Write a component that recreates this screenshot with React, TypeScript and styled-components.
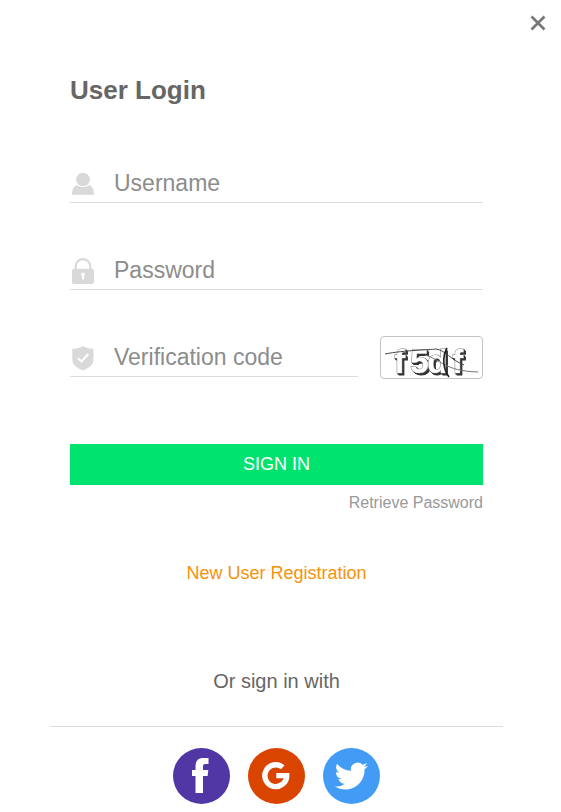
import React from "react";
import styled, { createGlobalStyle } from "styled-components";

const GlobalStyle = createGlobalStyle`
  *, *::before, *::after { box-sizing: border-box; }
  body {
    margin: 0;
    background: #fff;
    font-family: "Liberation Sans", Arial, sans-serif;
  }
`;

const Dialog = styled.main`
  margin-right: 8px;
  padding: 8px 0;
`;

const TopBar = styled.div`
  display: flex;
  justify-content: flex-end;
`;

const CloseButton = styled.button`
  display: flex;
  align-items: center;
  justify-content: center;
  width: 30px;
  height: 30px;
  padding: 0;
  border: 0;
  background: none;
  cursor: pointer;
`;

const Form = styled.form`
  display: flex;
  flex-direction: column;
  margin: 0 70px;
`;

const Title = styled.h1`
  margin: 36px 0 58px;
  color: #666;
  font-size: 26px;
  line-height: 32px;
`;

const Fields = styled.div`
  display: flex;
  flex-direction: column;
  gap: 48px;
`;

const CodeRow = styled.div`
  display: flex;
  align-items: center;
  gap: 22px;
  height: 39px;
`;

const Field = styled.label`
  display: flex;
  flex: 1;
  align-items: center;
  min-width: 0;
  gap: 18px;
  border-bottom: 1px solid #dcdcdc;
`;

const FieldIcon = styled.svg`
  flex: none;
  width: 26px;
  height: 32px;
  fill: #d9d9d9;
`;

const Input = styled.input`
  flex: 1;
  min-width: 0;
  height: 38px;
  padding: 0;
  border: 0;
  outline: 0;
  background: none;
  color: #666;
  font: 23px "Liberation Sans", Arial, sans-serif;
  &::placeholder { color: #8c8c8c; opacity: 1; }
`;

const CaptchaButton = styled.button`
  flex: none;
  width: 103px;
  height: 43px;
  padding: 0;
  border: 1px solid #c4c4c4;
  border-radius: 4px;
  background: #fff;
  cursor: pointer;
  svg { display: block; overflow: visible; }
`;

const CaptchaText = styled.text`
  fill: #fff;
  stroke: #777;
  stroke-width: 1px;
  paint-order: stroke;
  font: bold 34px "Liberation Sans", Arial, sans-serif;
  filter: drop-shadow(1px 1px 0 #333) drop-shadow(1px 1px 0 #333);
`;

const SubmitButton = styled.button`
  height: 41px;
  margin-top: 67px;
  border: 0;
  background: #00e36f;
  color: #fff;
  font: 18px "Liberation Sans", Arial, sans-serif;
  cursor: pointer;
`;

const TextLink = styled.a<{ $accent?: boolean }>`
  align-self: ${(p) => (p.$accent ? "center" : "flex-end")};
  margin-top: ${(p) => (p.$accent ? "46px" : "6px")};
  color: ${(p) => (p.$accent ? "#f7920a" : "#999")};
  font-size: ${(p) => (p.$accent ? "18px" : "16px")};
  line-height: 24px;
  text-decoration: none;
`;

const Social = styled.section`
  margin: 82px 50px 0;
`;

const SocialTitle = styled.h2`
  margin: 0;
  padding-bottom: 31px;
  border-bottom: 1px solid #dcdcdc;
  color: #666;
  font-size: 20px;
  font-weight: normal;
  line-height: 28px;
  text-align: center;
`;

const SocialList = styled.div`
  display: flex;
  justify-content: center;
  gap: 18px;
  padding-top: 21px;
`;

const SocialLink = styled.a<{ $color: string }>`
  width: 57px;
  height: 56px;
  border-radius: 50%;
  background: ${(p) => p.$color};
  svg { display: block; width: 57px; height: 56px; fill: #fff; }
`;

export default function App() {
  return (
    <>
      <GlobalStyle />
      <Dialog>
        <TopBar>
          <CloseButton type="button" aria-label="Close">
            <svg width="16" height="16" viewBox="0 0 16 16" stroke="#777" strokeWidth="2.7">
              <path d="M1.5 1.5 14.5 14.5M14.5 1.5 1.5 14.5" />
            </svg>
          </CloseButton>
        </TopBar>
        <Form onSubmit={(e) => e.preventDefault()}>
          <Title>User Login</Title>
          <Fields>
            <Field>
              <FieldIcon viewBox="0 0 26 32" aria-hidden="true">
                <ellipse cx="13" cy="12.5" rx="6.9" ry="6.7" />
                <path d="M6.8 18C10 20.8 16 20.8 19.2 18C22.8 20 24 23 24 27.7H2C2 23 3.2 20 6.8 18Z" />
              </FieldIcon>
              <Input aria-label="Username" placeholder="Username" autoComplete="username" />
            </Field>
            <Field>
              <FieldIcon viewBox="0 0 26 32" aria-hidden="true">
                <path d="M5.7 16V12.5a7.3 7.3 0 0 1 14.6 0V16" fill="none" stroke="#d9d9d9" strokeWidth="2.2" />
                <rect x="2" y="14.7" width="22" height="15.3" rx="2" />
                <path d="M13 18.5a2 2 0 0 1 1 3.7V25.5h-2v-3.3a2 2 0 0 1 1-3.7Z" fill="#fff" />
              </FieldIcon>
              <Input type="password" aria-label="Password" placeholder="Password" autoComplete="current-password" />
            </Field>
            <CodeRow>
              <Field>
                <FieldIcon viewBox="0 0 26 32" aria-hidden="true">
                  <path d="M13 5C16 7 19.5 8 23.5 7.7V18.5C23.5 24 19 27 13 29.5C7 27 2.3 24 2.3 18.5V7.7C6.5 8 10 7 13 5Z" />
                  <path d="m8 17.3 3.5 3.2L18.3 13" fill="none" stroke="#fff" strokeWidth="2" />
                </FieldIcon>
                <Input aria-label="Verification code" placeholder="Verification code" autoComplete="off" />
              </Field>
              <CaptchaButton type="button" aria-label="Refresh verification image">
                <svg width="101" height="41" viewBox="0 0 101 41">
                  <CaptchaText x="13 29 46 71" y="36">f5df</CaptchaText>
                  <g fill="none" stroke="#444">
                    <path d="M4 17C24 13 48 13 55 12C64 13 70 23 83 28" />
                    <path d="M44 18C59 22 63 34 97 35" stroke="#777" />
                    <path d="M66 11C61 20 62 32 68 40" strokeWidth="1.6" stroke="#222" />
                  </g>
                </svg>
              </CaptchaButton>
            </CodeRow>
          </Fields>
          <SubmitButton type="submit">SIGN IN</SubmitButton>
          <TextLink href="#retrieve">Retrieve Password</TextLink>
          <TextLink href="#register" $accent>New User Registration</TextLink>
        </Form>
        <Social>
          <SocialTitle>Or sign in with</SocialTitle>
          <SocialList>
            <SocialLink href="#facebook" aria-label="Facebook" $color="#5137a6">
              <svg viewBox="0 0 57 56">
                <path d="M22.5 45V28H19V22h3.5V18.5c0-5.5 2.6-8.5 7.6-8.5H35.5v6h-3c-2 0-2.5.8-2.5 2.5V22h5.3l-.7 6H30V45Z" />
              </svg>
            </SocialLink>
            <SocialLink href="#google" aria-label="Google" $color="#d94400">
              <svg viewBox="0 0 57 56">
                <path d="M34.8 19.3A10.9 10.9 0 1 0 38.7 27.6H28.3" fill="none" stroke="#fff" strokeWidth="5.4" />
              </svg>
            </SocialLink>
            <SocialLink href="#twitter" aria-label="Twitter" $color="#429cf6">
              <svg viewBox="0 0 57 56">
                <path
                  transform="translate(11.8 11.5) scale(1.38)"
                  d="M23.95 4.57a10 10 0 0 1-2.82.77 4.96 4.96 0 0 0 2.16-2.72c-.95.55-2 .95-3.13 1.18a4.92 4.92 0 0 0-8.38 4.48C7.69 8.1 4.07 6.13 1.64 3.16a4.93 4.93 0 0 0 1.52 6.57 4.9 4.9 0 0 1-2.23-.61v.06a4.92 4.92 0 0 0 3.95 4.83 5 5 0 0 1-2.21.08 4.94 4.94 0 0 0 4.6 3.42A9.87 9.87 0 0 1 0 19.54a13.99 13.99 0 0 0 7.55 2.21c9.05 0 14-7.5 14-13.98 0-.21 0-.42-.02-.63a9.94 9.94 0 0 0 2.46-2.55Z"
                />
              </svg>
            </SocialLink>
          </SocialList>
        </Social>
      </Dialog>
    </>
  );
}
